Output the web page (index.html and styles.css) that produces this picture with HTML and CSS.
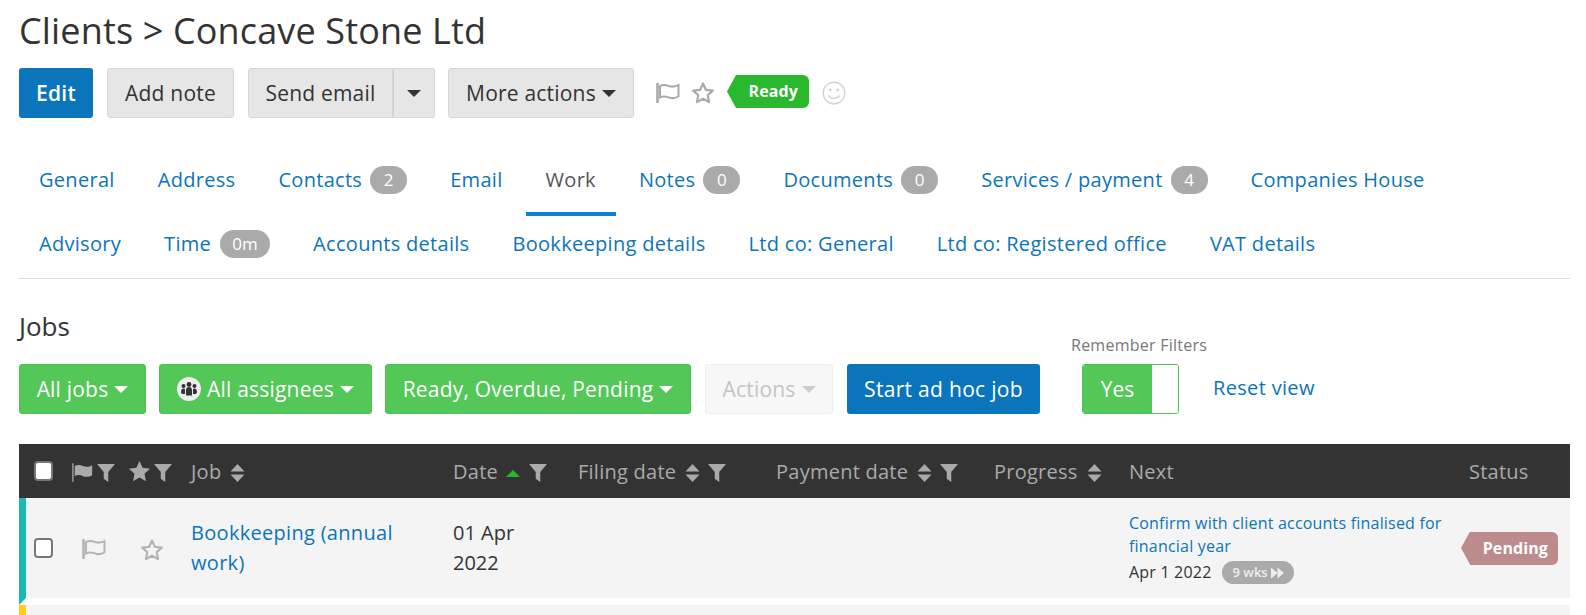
FILE: index.html
```html
<!DOCTYPE html>
<html lang="en">
<head>
  <meta charset="UTF-8">
  <meta name="viewport" content="width=device-width, initial-scale=1.0">
  <title>Clients &gt; Concave Stone Ltd</title>
  <link rel="stylesheet" href="styles.css">
</head>
<body>
  <svg class="defs" width="0" height="0">
    <symbol id="flag-line" viewBox="0 0 24 20">
      <path d="M1.500 0v20" stroke="currentColor" stroke-width="2.600" fill="none"/>
      <path d="M4 3c3.500-2 6-1 9 0s6 1 9.500-1v11.500c-3.500 2-6.500 2-9.500 1s-5.500-2-9 0z" stroke="currentColor" stroke-width="2" fill="none"/>
    </symbol>
    <symbol id="flag-fill" viewBox="0 0 24 20">
      <path d="M1 0v20" stroke="currentColor" stroke-width="1.400" fill="none"/>
      <path d="M3 3c4-2 6-1 9 0s7 1 10-1v11c-3 2-7 2-10 1s-5-2-9 0z" fill="currentColor"/>
    </symbol>
    <symbol id="star-line" viewBox="0 0 24 24">
      <path d="M12 2.500l2.900 6.300 6.900.8-5.100 4.700 1.400 6.800-6.100-3.400-6.100 3.400 1.400-6.800L2.200 9.600l6.900-.8z" stroke="currentColor" stroke-width="2.200" fill="none" stroke-linejoin="round"/>
    </symbol>
    <symbol id="star-fill" viewBox="0 0 24 24">
      <path d="M12 1l3.200 7.200 7.800.9-5.800 5.300 1.600 7.700L12 18.200l-6.800 3.900 1.600-7.700L1 9.100l7.800-.9z" fill="currentColor"/>
    </symbol>
    <symbol id="funnel" viewBox="0 0 16 16">
      <path d="M0 0h16l-6 7v9l-4-3V7z" fill="currentColor"/>
    </symbol>
    <symbol id="sort" viewBox="0 0 14 18">
      <path d="M7 0l7 7.500H0zM7 18l-7-7.500h14z" fill="currentColor"/>
    </symbol>
  </svg>

  <h1 class="page-title">Clients &gt; Concave Stone Ltd</h1>

  <div class="action-bar">
    <a class="btn btn-blue btn-edit">Edit</a>
    <a class="btn btn-grey btn-note">Add note</a>
    <div class="split">
      <a class="btn btn-grey split-main">Send email</a>
      <a class="btn btn-grey split-caret"><span class="caret caret-dark"></span></a>
    </div>
    <a class="btn btn-grey btn-more"><span>More actions</span><span class="caret caret-dark"></span></a>
    <svg class="icon-flag-top"><use href="#flag-line"/></svg>
    <svg class="icon-star-top"><use href="#star-line"/></svg>
    <span class="tag tag-ready">Ready</span>
    <svg class="icon-smile" viewBox="0 0 24 24">
      <circle cx="12" cy="12" r="10.800" stroke="currentColor" stroke-width="1.400" fill="none"/>
      <circle cx="8.300" cy="9" r="1.400" fill="currentColor"/>
      <circle cx="15.700" cy="9" r="1.400" fill="currentColor"/>
      <path d="M6.500 14.500c2.500 3.800 8.500 3.800 11 0" stroke="currentColor" stroke-width="1.400" fill="none"/>
    </svg>
  </div>

  <nav class="tabs">
    <ul class="tab-row">
      <li><a>General</a></li>
      <li><a>Address</a></li>
      <li><a><span>Contacts</span><span class="count">2</span></a></li>
      <li><a>Email</a></li>
      <li class="active"><a>Work</a></li>
      <li><a><span>Notes</span><span class="count">0</span></a></li>
      <li><a><span>Documents</span><span class="count">0</span></a></li>
      <li><a><span>Services / payment</span><span class="count">4</span></a></li>
      <li><a>Companies House</a></li>
    </ul>
    <ul class="tab-row">
      <li><a>Advisory</a></li>
      <li><a><span>Time</span><span class="count count-wide">0m</span></a></li>
      <li><a>Accounts details</a></li>
      <li><a>Bookkeeping details</a></li>
      <li><a>Ltd co: General</a></li>
      <li><a>Ltd co: Registered office</a></li>
      <li><a>VAT details</a></li>
    </ul>
  </nav>

  <h2 class="section-title">Jobs</h2>

  <div class="filter-bar">
    <a class="btn btn-green f-jobs"><span>All jobs</span><span class="caret"></span></a>
    <a class="btn btn-green f-assignees">
      <svg class="people" viewBox="0 0 24 24">
        <circle cx="12" cy="12" r="12" fill="#eee"/>
        <g fill="#333">
          <circle cx="6.500" cy="9" r="2"/><circle cx="12" cy="7.500" r="2.400"/><circle cx="17.500" cy="9" r="2"/>
          <path d="M4 15.500c0-3 1-4 2.500-4 1 0 1.500.5 1.500 1v4.500H5zM20 15.500c0-3-1-4-2.500-4-1 0-1.500.5-1.500 1v4.500h3zM9 18.500v-5.500c0-2 1.500-3 3-3s3 1 3 3v5.500z"/>
        </g>
      </svg>
      <span>All assignees</span><span class="caret"></span>
    </a>
    <a class="btn btn-green f-status"><span>Ready, Overdue, Pending</span><span class="caret"></span></a>
    <a class="btn btn-disabled f-actions"><span>Actions</span><span class="caret caret-pale"></span></a>
    <a class="btn btn-blue f-start">Start ad hoc job</a>
    <div class="remember">
      <label>Remember Filters</label>
      <div class="toggle"><span class="toggle-on">Yes</span><span class="toggle-handle"></span></div>
    </div>
    <a class="reset-link">Reset view</a>
  </div>

  <table class="jobs">
    <colgroup>
      <col class="c-check"><col class="c-flag"><col class="c-star"><col class="c-job"><col class="c-date">
      <col class="c-filing"><col class="c-payment"><col class="c-progress"><col class="c-next"><col class="c-status">
    </colgroup>
    <thead>
      <tr>
        <th class="cell-check"><span class="checkbox checkbox-head"></span></th>
        <th><svg class="th-flag"><use href="#flag-fill"/></svg><svg class="th-funnel"><use href="#funnel"/></svg></th>
        <th><svg class="th-star"><use href="#star-fill"/></svg><svg class="th-funnel"><use href="#funnel"/></svg></th>
        <th>Job<svg class="th-sort"><use href="#sort"/></svg></th>
        <th>Date<span class="sort-up"></span><svg class="th-funnel th-funnel-gap"><use href="#funnel"/></svg></th>
        <th>Filing date<svg class="th-sort"><use href="#sort"/></svg><svg class="th-funnel th-funnel-gap"><use href="#funnel"/></svg></th>
        <th>Payment date<svg class="th-sort"><use href="#sort"/></svg><svg class="th-funnel th-funnel-gap"><use href="#funnel"/></svg></th>
        <th>Progress<svg class="th-sort"><use href="#sort"/></svg></th>
        <th>Next</th>
        <th class="th-status">Status</th>
      </tr>
    </thead>
    <tbody>
      <tr class="row-teal">
        <td class="cell-check"><span class="checkbox"></span></td>
        <td><svg class="row-flag"><use href="#flag-line"/></svg></td>
        <td><svg class="row-star"><use href="#star-line"/></svg></td>
        <td class="cell-job"><a>Bookkeeping (annual work)</a></td>
        <td class="cell-date">01 Apr 2022</td>
        <td></td>
        <td></td>
        <td></td>
        <td class="cell-next">
          <a>Confirm with client accounts finalised for financial year</a>
          <div class="next-date"><span>Apr 1 2022</span><span class="weeks">9 wks<svg viewBox="0 0 14 12"><path d="M0 0l7 6-7 6zM7 0l7 6-7 6z" fill="currentColor"/></svg></span></div>
        </td>
        <td class="cell-status"><span class="tag tag-pending">Pending</span></td>
      </tr>
      <tr class="row-yellow">
        <td class="cell-check"></td><td></td><td></td><td></td><td></td><td></td><td></td><td></td><td></td><td></td>
      </tr>
    </tbody>
  </table>
</body>
</html>
```

FILE: styles.css
```css
html, body {
  height: 100%;
  overflow: hidden;
}
body {
  margin: 0;
  padding: 0 16px 0 19px;
  font-family: "Open Sans", sans-serif;
  font-size: 20px;
  color: #333;
  background: #fff;
}
a {
  color: #0b75bb;
  text-decoration: none;
}
.defs {
  position: absolute;
}

.page-title {
  margin: 0;
  padding-top: 7px;
  height: 60px;
  box-sizing: border-box;
  font-size: 36px;
  line-height: 48px;
  font-weight: 400;
  letter-spacing: .15px;
}

/* buttons */
.action-bar {
  display: flex;
  align-items: center;
  gap: 14px;
  height: 50px;
  margin-top: 8px;
}
.filter-bar {
  display: flex;
  align-items: center;
  gap: 13px;
  margin-top: 15px;
  height: 50px;
}
.btn {
  display: flex;
  align-items: center;
  justify-content: center;
  gap: 6px;
  box-sizing: border-box;
  height: 50px;
  border: 1px solid transparent;
  border-radius: 3px;
  white-space: nowrap;
  font-size: 21px;
  letter-spacing: .2px;
}
.btn-blue {
  background: #0b75bb;
  color: #fff;
  font-weight: 600;
}
.btn-edit { width: 74px; letter-spacing: .3px; }
.f-start { width: 193px; margin-left: 1px; font-weight: 500; letter-spacing: .3px; }
.btn-grey {
  background: #e6e6e6;
  border-color: #d6d6d6;
  color: #333;
}
.btn-note { width: 127px; }
.btn-more { width: 186px; margin-left: -1px; }
.btn-green {
  background: #53c757;
  border-color: #4cc350;
  color: #fff;
}
.btn-disabled {
  background: #f7f7f7;
  border-color: #eee;
  color: #c4c4c4;
}
.split {
  display: flex;
}
.split-main {
  width: 145px;
  border-radius: 3px 0 0 3px;
}
.split-caret {
  width: 42px;
  border-left: 0;
  border-radius: 0 3px 3px 0;
  box-shadow: inset 1px 0 0 #cfcfcf;
}
.caret {
  display: inline-block;
  width: 0;
  height: 0;
  border-left: 7px solid transparent;
  border-right: 7px solid transparent;
  border-top: 7px solid #fff;
}
.caret-dark { border-top-color: #333; }
.caret-pale { border-top-color: #ccc; }

.icon-flag-top, .icon-star-top, .icon-smile {
  flex: none;
  color: #aaa;
}
.icon-flag-top { width: 24px; height: 20px; margin-left: 8px; }
.icon-star-top { width: 24px; height: 24px; margin-left: -3px; }
.icon-smile { width: 24px; height: 24px; color: #d4d4d4; margin-left: -1px; }

.tag {
  position: relative;
  display: inline-block;
  box-sizing: border-box;
  height: 33px;
  line-height: 32px;
  border-radius: 0 6px 6px 0;
  color: #fff;
  font-size: 16px;
  font-weight: 700;
  letter-spacing: .1px;
  text-align: right;
}
.tag::before {
  content: "";
  position: absolute;
  left: -9px;
  top: 0;
  width: 9px;
  height: 33px;
  background: inherit;
  clip-path: polygon(100% 0, 0 50%, 100% 100%);
}
.tag-ready {
  width: 73px;
  margin-left: 7px;
  margin-top: -3px;
  padding-right: 11px;
  background: #2ab82e;
}
.tag-pending {
  width: 88px;
  margin-left: 9px;
  padding-right: 10px;
  background: #bc8c8c;
}

/* tabs */
.tabs {
  margin-top: 29px;
  padding-bottom: 3px;
  border-bottom: 1px solid #ddd;
}
.tab-row {
  display: flex;
  gap: 3px;
  margin: 0;
  padding: 0;
  list-style: none;
  height: 64px;
  letter-spacing: .3px;
}
.tab-row li a {
  display: flex;
  align-items: center;
  gap: 8px;
  height: 65px;
  box-sizing: border-box;
  padding: 0 20px;
  white-space: nowrap;
}
.tab-row .active a {
  color: #555;
  box-shadow: 0 4px 0 #0c82d1;
}
.count {
  display: inline-block;
  min-width: 37px;
  box-sizing: border-box;
  height: 28px;
  line-height: 28px;
  border-radius: 14px;
  padding: 0 10px;
  background: #aaa;
  color: #fff;
  font-size: 17px;
  letter-spacing: 0;
  text-align: center;
}
.count-wide { width: 50px; margin-left: 1px; }

.section-title {
  margin: 29px 0 0;
  height: 41px;
  font-size: 26px;
  line-height: 36px;
  font-weight: 400;
}

/* filters */
.f-jobs { width: 127px; }
.f-assignees { width: 213px; }
.f-status { width: 306px; margin-right: 1px; }
.f-actions { width: 128px; }
.people {
  width: 24px;
  height: 24px;
}
.remember {
  position: relative;
  margin-left: 29px;
  height: 50px;
}
.remember label {
  position: absolute;
  left: -11px;
  top: -31px;
  font-size: 16px;
  line-height: 24px;
  letter-spacing: .25px;
  color: #777;
  white-space: nowrap;
}
.toggle {
  display: flex;
  box-sizing: border-box;
  width: 97px;
  height: 50px;
  border: 1px solid #4cc350;
  border-radius: 3px;
  overflow: hidden;
}
.toggle-on {
  width: 69px;
  line-height: 48px;
  font-size: 21px;
  text-align: center;
  background: #53c757;
  color: #fff;
}
.toggle-handle {
  flex: 1;
  background: #fff;
}
.reset-link {
  margin-left: 21px;
  margin-top: -3px;
  letter-spacing: .33px;
}

/* table */
.jobs {
  width: 1551px;
  margin-top: 30px;
  border-collapse: separate;
  border-spacing: 0;
  table-layout: fixed;
}
.c-check { width: 45px; }
.c-flag { width: 58px; }
.c-star { width: 61px; }
.c-job { width: 262px; }
.c-date { width: 125px; }
.c-filing { width: 198px; }
.c-payment { width: 218px; }
.c-progress { width: 135px; }
.c-next { width: 340px; }
.jobs th {
  height: 54px;
  box-sizing: border-box;
  padding: 0 0 0 8px;
  background: #333;
  color: #aaa;
  font-weight: 400;
  letter-spacing: .25px;
  text-align: left;
  white-space: nowrap;
}
.jobs td {
  height: 107px;
  box-sizing: border-box;
  padding: 0 8px;
  background: #f4f4f4;
  background-clip: padding-box;
  border-bottom: 7px solid #fff;
  vertical-align: middle;
}
.jobs .row-yellow td {
  height: 10px;
  border-bottom: 0;
}
.jobs .cell-check {
  padding: 0 0 0 8px;
}
.jobs thead .cell-check {
  padding-left: 15px;
}
.row-teal .cell-check {
  border-left: 7px solid #1abab0;
}
.row-yellow .cell-check {
  border-left: 7px solid #ffcc17;
}
.checkbox {
  display: block;
  box-sizing: border-box;
  width: 19px;
  height: 20px;
  border: 2px solid #777;
  border-radius: 4px;
  background: #fff;
}
.checkbox-head {
  background: #fff;
}
.th-flag { width: 22px; height: 19px; color: #aaa; vertical-align: -3px; }
.th-star { width: 23px; height: 23px; color: #aaa; vertical-align: -4px; margin-left: -2px; }
.th-funnel { width: 18px; height: 18px; color: #aaa; margin-left: 3px; vertical-align: -3px; }
.th-funnel-gap { margin-left: 8px; }
.th-sort { width: 15px; height: 18px; color: #aaa; vertical-align: -3px; margin-left: 9px; }
.sort-up {
  display: inline-block;
  width: 0;
  height: 0;
  margin: 0 1px 2px 8px;
  border-left: 7px solid transparent;
  border-right: 7px solid transparent;
  border-bottom: 7px solid #2ab82e;
}
.row-flag { width: 24px; height: 20px; color: #b4b4b4; margin-left: 10px; vertical-align: -3px; }
.row-star { width: 24px; height: 24px; color: #b4b4b4; margin-left: 10px; vertical-align: -6px; }
.cell-job, .cell-date {
  line-height: 30px;
}
.cell-job {
  letter-spacing: .3px;
}
.jobs td.cell-next {
  font-size: 16px;
  line-height: 23px;
  letter-spacing: .2px;
}
.next-date {
  display: flex;
  align-items: center;
  gap: 10px;
  margin-top: 3px;
  color: #333;
}
.weeks {
  display: inline-flex;
  align-items: center;
  gap: 3px;
  height: 23px;
  padding: 0 10px 0 11px;
  border-radius: 12px;
  background: #aaa;
  color: #eee;
  font-size: 13px;
  font-weight: 600;
  letter-spacing: 0;
}
.weeks svg { width: 13px; height: 12px; }
.jobs td.cell-status {
  padding: 0;
}
```
